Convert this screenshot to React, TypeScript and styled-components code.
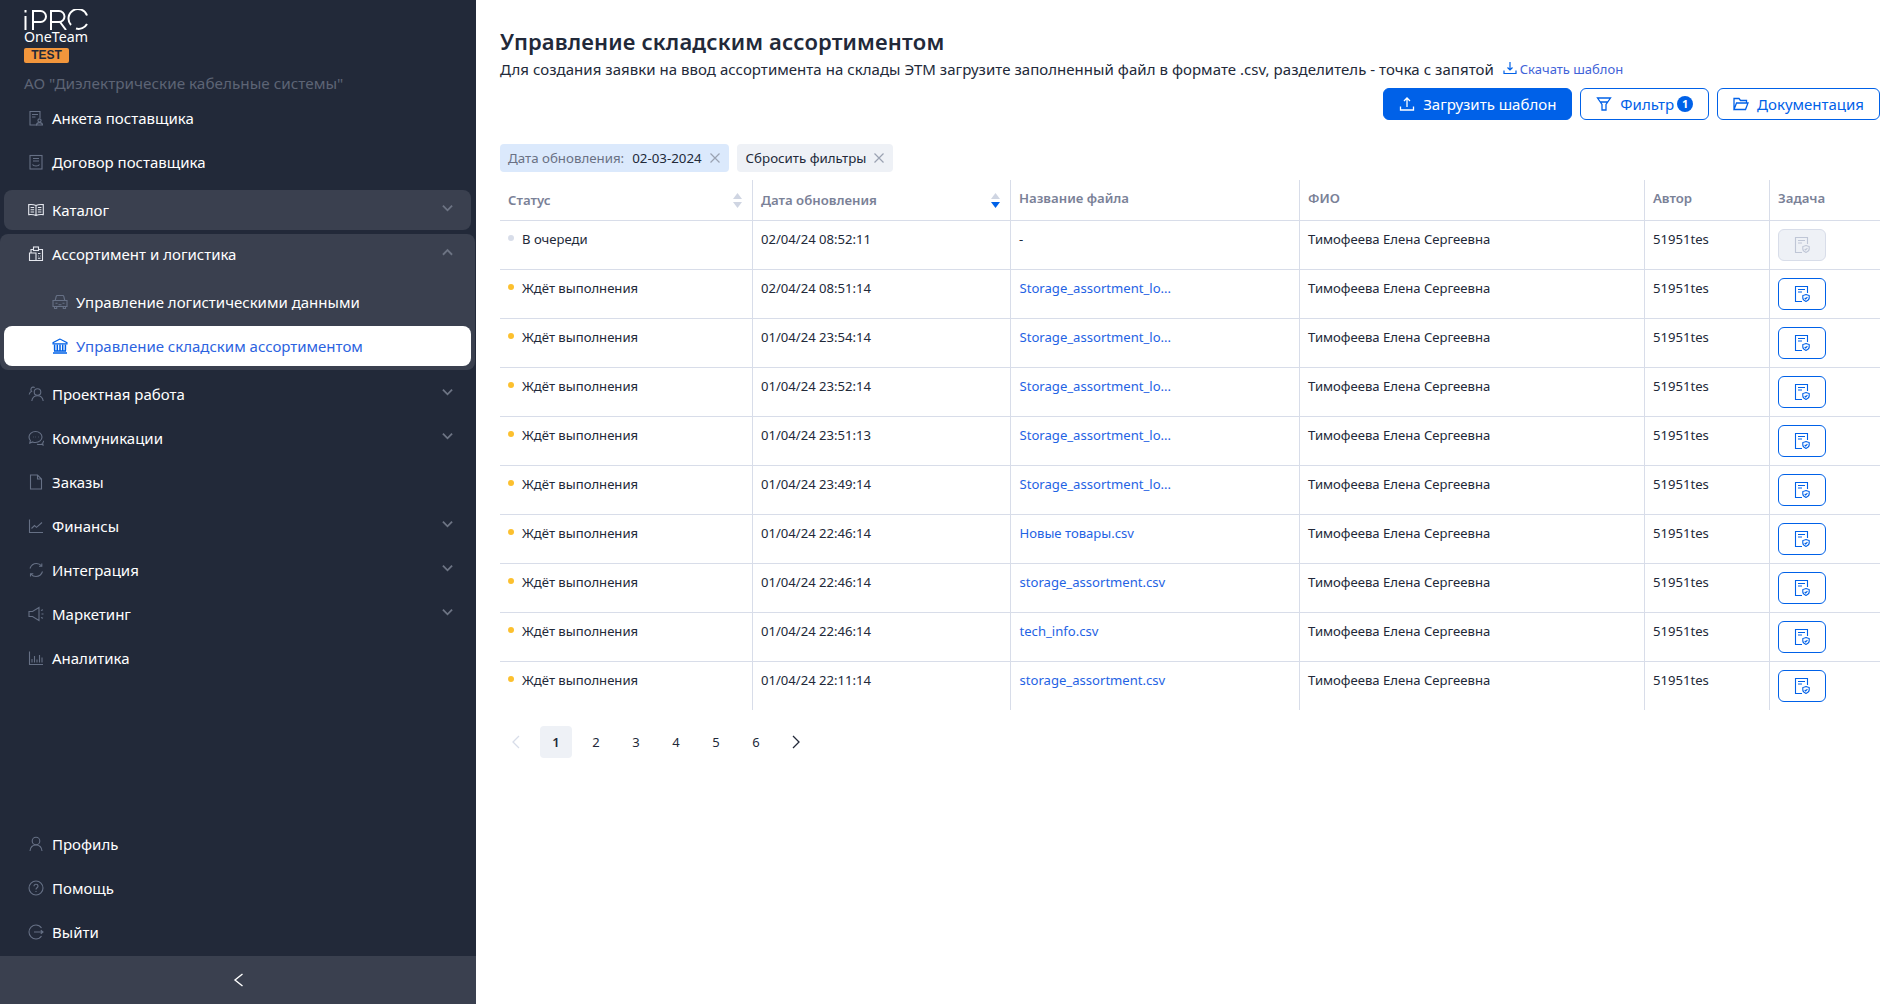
import * as React from "react";
import styled, { createGlobalStyle } from "styled-components";

const GlobalStyle = createGlobalStyle`
  html, body {
    margin: 0;
    padding: 0;
    height: 100%;
    background: #ffffff;
    font-family: "Noto Sans", "Liberation Sans", sans-serif;
    color: #222939;
  }
  #root { height: 100%; }
  * { box-sizing: border-box; }
`;

const Page = styled.div`
  display: flex;
  width: 100%;
  height: 1004px;
  overflow: hidden;
`;

/* ---------- sidebar ---------- */
const Sidebar = styled.aside`
  width: 476px;
  flex-shrink: 0;
  height: 100%;
  display: flex;
  flex-direction: column;
  background: #222939;
  color: #ffffff;
`;

const LogoBlock = styled.div`
  padding: 9px 0 0 24px;
  height: 98px;
`;

const LogoMark = styled.svg`
  display: block;
  width: 65px;
  height: 21px;
`;

const LogoName = styled.div`
  font-size: 14.2px;
  line-height: 15px;
  margin-top: -1px;
  font-weight: 400;
  width: 66px;
`;

const TestBadge = styled.div`
  width: 45px;
  height: 15px;
  margin-top: 4px;
  border-radius: 2px;
  background: #f2963c;
  color: #222939;
  font-size: 12px;
  line-height: 15px;
  font-weight: 600;
  text-align: center;
  font-family: "Liberation Sans", sans-serif;
`;

const Company = styled.div`
  margin-top: 10px;
  font-size: 15.3px;
  line-height: 20px;
  color: #5d6475;
  white-space: nowrap;
`;

const Nav = styled.nav`
  display: flex;
  flex-direction: column;
  gap: 4px;
`;

const Item = styled.div<{ $lit?: boolean; $hover?: boolean; $active?: boolean; $sub?: boolean }>`
  display: flex;
  align-items: center;
  height: 40px;
  margin: 0 5px 0 4px;
  padding-left: ${(p) => (p.$sub ? "48px" : "24px")};
  padding-right: 18px;
  gap: 8px;
  border-radius: 8px;
  font-size: 15px;
  line-height: 20px;
  white-space: nowrap;
  background: ${(p) => (p.$active ? "#ffffff" : p.$hover ? "#3a404f" : "transparent")};
  color: ${(p) => (p.$active ? "#2c63e0" : "#ffffff")};
  svg.nav-icon {
    color: ${(p) => (p.$active ? "#0061e8" : p.$lit ? "#e4e7ee" : "#667085")};
    flex-shrink: 0;
  }
`;

const ItemLabel = styled.span`
  flex: 1;
  padding-bottom: 1px;
`;

const Group = styled.div`
  display: flex;
  flex-direction: column;
  gap: 4px;
  margin-right: 1px;
  padding: 0 0 4px;
  border-radius: 8px;
  background: #3a404f;
  ${Item} {
    margin-right: 4px;
  }
`;

const CatalogSlot = styled.div`
  margin-top: 4px;
`;

const FirstSub = styled.div`
  margin-top: 4px;
`;

const Chevron = styled.svg`
  width: 11px;
  height: 8px;
  margin: -5px 0 0 0;
  color: #6d7484;
  flex-shrink: 0;
`;

const SideBottom = styled(Nav)`
  margin-top: auto;
  padding-bottom: 4px;
`;

const Collapse = styled.div`
  height: 48px;
  flex-shrink: 0;
  background: #3a404f;
  display: flex;
  align-items: center;
  justify-content: center;
  svg {
    width: 11px;
    height: 14px;
  }
`;

/* ---------- main ---------- */
const Main = styled.main`
  flex: 1;
  min-width: 0;
  padding: 27px 24px 0;
`;

const Title = styled.h1`
  margin: 0;
  font-size: 22px;
  line-height: 28px;
  font-weight: 600;
  letter-spacing: 0.15px;
  color: #222939;
`;

const Description = styled.div`
  display: flex;
  align-items: center;
  gap: 9px;
  height: 20px;
  margin-top: 4px;
  font-size: 15px;
  line-height: 20px;
  letter-spacing: 0.04px;
  white-space: nowrap;
`;

const DownloadLink = styled.a`
  display: inline-flex;
  align-items: center;
  gap: 3px;
  font-size: 13px;
  letter-spacing: 0;
  color: #3f63d8;
  svg {
    width: 14px;
    height: 14px;
    color: #0061e8;
    margin-bottom: 3px;
  }
`;

const Actions = styled.div`
  display: flex;
  justify-content: flex-end;
  gap: 8px;
  margin-top: 9px;
`;

const Button = styled.button<{ $primary?: boolean }>`
  display: inline-flex;
  align-items: center;
  justify-content: center;
  gap: 8px;
  height: 32px;
  padding: 0 15px;
  border-radius: 6px;
  border: 1px solid #0061e8;
  background: ${(p) => (p.$primary ? "#0061e8" : "#ffffff")};
  color: ${(p) => (p.$primary ? "#ffffff" : "#0061e8")};
  font-family: inherit;
  font-size: 15px;
  white-space: nowrap;
  svg {
    width: 16px;
    height: 16px;
    flex-shrink: 0;
  }
`;

const Counter = styled.span`
  width: 16px;
  height: 16px;
  margin-left: -5px;
  border-radius: 50%;
  background: #0061e8;
  color: #ffffff;
  font-size: 11px;
  line-height: 16px;
  font-weight: 700;
  text-align: center;
`;

const Chips = styled.div`
  display: flex;
  gap: 8px;
  margin-top: 24px;
`;

const Chip = styled.div<{ $blue?: boolean }>`
  display: inline-flex;
  align-items: center;
  height: 28px;
  padding: 0 8px 0 ${(p) => (p.$blue ? "8px" : "9px")};
  gap: 7px;
  border-radius: 4px;
  background: ${(p) => (p.$blue ? "#dbe9fc" : "#eef1f6")};
  font-size: 13.3px;
  white-space: nowrap;
  color: #222939;
  svg {
    width: 12px;
    height: 12px;
    color: #9aa2b2;
  }
`;

const ChipMuted = styled.span`
  color: #6a7184;
  margin-right: 8px;
`;

const Table = styled.table`
  width: 1380px;
  margin-top: 8px;
  border-collapse: separate;
  border-spacing: 0;
  table-layout: fixed;
  font-size: 13.1px;
  line-height: 20px;
`;

const Th = styled.th<{ $last?: boolean; $sortable?: boolean }>`
  position: relative;
  height: 41px;
  padding: ${(p) => (p.$sortable ? "10px 8px 0" : "8px 8px 0")};
  vertical-align: top;
  text-align: left;
  font-weight: 600;
  font-size: 13.2px;
  color: #7a8197;
  border-bottom: 1px solid #d8dde9;
  border-right: ${(p) => (p.$last ? "none" : "1px solid #d8dde9")};
`;

const Td = styled.td<{ $last?: boolean }>`
  height: 49px;
  padding: 8px;
  vertical-align: top;
  white-space: nowrap;
  overflow: hidden;
  color: #222939;
  border-right: ${(p) => (p.$last ? "none" : "1px solid #d8dde9")};
  tr:not(:last-child) > & {
    border-bottom: 1px solid #d8dde9;
  }
  tr:last-child > & {
    height: 48px;
  }
`;

const SortIcon = styled.svg`
  position: absolute;
  right: 9px;
  top: 12px;
  width: 11px;
  height: 17px;
`;

const StatusCell = styled.div`
  display: flex;
  align-items: center;
  gap: 8px;
`;

const Dot = styled.span<{ $tone: "wait" | "queue" }>`
  width: 6px;
  height: 6px;
  margin-top: -2px;
  border-radius: 50%;
  background: ${(p) => (p.$tone === "wait" ? "#fcc02e" : "#d8dde9")};
  flex-shrink: 0;
`;

const FileLink = styled.a`
  margin-left: 0.5px;
  color: #1f63e4;
`;

const TaskButton = styled.button<{ $disabled?: boolean }>`
  display: flex;
  align-items: center;
  justify-content: center;
  width: 48px;
  height: 32px;
  padding: 0;
  border-radius: 6px;
  border: 1px solid ${(p) => (p.$disabled ? "#d8dde9" : "#0061e8")};
  background: ${(p) => (p.$disabled ? "#eef1f6" : "#ffffff")};
  color: ${(p) => (p.$disabled ? "#bfc6d6" : "#0061e8")};
  svg {
    width: 16px;
    height: 16px;
  }
`;

const Pager = styled.div`
  display: flex;
  align-items: center;
  margin-top: 16px;
`;

const PageCell = styled.div<{ $current?: boolean; $muted?: boolean }>`
  width: 32px;
  height: 32px;
  margin-right: 8px;
  display: flex;
  align-items: center;
  justify-content: center;
  border-radius: 4px;
  font-size: 13px;
  color: ${(p) => (p.$muted ? "#d8dde9" : "#222939")};
  background: ${(p) => (p.$current ? "#eef1f6" : "transparent")};
  font-weight: ${(p) => (p.$current ? 600 : 400)};
  svg {
    width: 9px;
    height: 14px;
    margin-left: ${(p) => (p.$muted ? "-2px" : "0")};
  }
`;

/* ---------- icons ---------- */
type IconName =
  | "form" | "contract" | "book" | "clipboard" | "car" | "bank" | "people" | "chat"
  | "doc" | "chart" | "sync" | "horn" | "bars" | "user" | "help" | "exit";

const iconPaths: Record<IconName, React.ReactNode> = {
  form: (
    <>
      <path d="M9 15H2V1.500h10V8" />
      <path d="M4 4.500h6M4 7h3.500" />
      <circle cx="11.500" cy="10.500" r="1.600" />
      <path d="M8.500 15c0-1.600 1.200-2.400 3-2.400s3 .8 3 2.400z" />
    </>
  ),
  contract: (
    <>
      <rect x="2" y="1.500" width="12" height="13.500" />
      <path d="M5 4.500h6M5 7h6M4.500 10.500c1 2 6 2 7 0" />
    </>
  ),
  book: (
    <>
      <path d="M8 3.500C6 2.500 3 2.300.7 2.600v10C3 12.300 6 12.500 8 13.600c2-1.100 5-1.300 7.300-1V2.600C13 2.300 10 2.500 8 3.500zM8 3.500v10" />
      <path d="M2.600 5.500h3.500M2.600 7.800h3.500M2.600 10h3.500M9.900 5.500h3.500M9.900 7.800h3.500M9.900 10h3.500" />
    </>
  ),
  clipboard: (
    <>
      <path d="M5.500 3.500H3V7M10.500 3.500H14.500V14.500H1.500V7H8V14.500" />
      <rect x="5.500" y="1" width="5" height="3.500" />
      <path d="M10 7.500h2.500M10 10h.6M12 10h.6M10 12.300h2.500" />
    </>
  ),
  car: (
    <>
      <path d="M3.200 6.500l1-4.200c.1-.5.5-.8 1-.8h5.600c.5 0 .9.3 1 .8l1 4.200" />
      <path d="M1 6.500h14v6H1zM2.500 12.500v2h2.200v-2M11.300 12.500v2h2.200v-2" />
      <path d="M3.500 9.300h2M10.500 9.300h2M6.500 10.800h3" />
    </>
  ),
  bank: (
    <>
      <path d="M8 1L1 4.700v1.200h14V4.700z" />
      <path d="M2.600 6.500v6M5.300 6.500v6M8 6.500v6M10.700 6.500v6M13.400 6.500v6M2 13h12M1 15h14" strokeWidth="1.500" />
    </>
  ),
  people: (
    <>
      <circle cx="9.500" cy="6" r="3.300" />
      <path d="M3.800 15c.4-3 2.700-5.200 5.700-5.200s5.300 2.200 5.700 5.200" />
      <path d="M6.700 1.500c-.9-.6-2.800-.6-3.600.9-.5 1-.3 2 .5 2.900-1.300.6-2.100 1.700-2.400 3.200" />
    </>
  ),
  chat: (
    <>
      <path d="M7.500 1.500c-3.500 0-6.500 2.400-6.500 5.500 0 1.300.5 2.500 1.400 3.500L1.800 13l2.900-1.100c.9.4 1.800.6 2.800.6 3.500 0 6.500-2.400 6.500-5.500S11 1.500 7.500 1.500z" />
      <path d="M5 7h.5M7.500 7H8M10 7h.5M9 14.200c2 .6 3.500.3 4.500 0l1.500.8-.3-2c.5-.7.9-1.400 1-2.200" />
    </>
  ),
  doc: <path d="M2.500 1h7l4 4v10h-11zM9.500 1v4h4" />,
  chart: (
    <>
      <path d="M1.500 1.500V14.500H15" />
      <path d="M3.500 10.500l3-3 2 1.800L14 4.500" />
    </>
  ),
  sync: (
    <>
      <path d="M2 6.500C3 3.500 5.500 1.500 8.500 1.500c2 0 3.800.9 5 2.400" />
      <path d="M14.500 9.500c-1 3-3.500 5-6.500 5-2 0-3.800-.9-5-2.400" />
      <path d="M13.800 1.500v2.800H11M2.500 14.500v-2.800h2.800" />
    </>
  ),
  horn: (
    <>
      <path d="M1 5.500h3.500L11 1.500v13l-6.500-4H1z" />
      <path d="M13 4.500l2-.8M13.500 8H15.500M13 11.500l2 .8" />
    </>
  ),
  bars: <path d="M1.500 1.500V14.500H15M4 12.500V9M6.500 12.500V6M9 12.500V9.500M11.500 12.500V5M14 12.500V7.500" />,
  user: (
    <>
      <circle cx="8" cy="5" r="3.800" />
      <path d="M2 15c.4-3.600 2.800-6 6-6s5.600 2.400 6 6" />
    </>
  ),
  help: (
    <>
      <circle cx="8" cy="8" r="7" />
      <path d="M6 6.300c0-1.200.9-2 2-2s2 .8 2 1.900c0 1.500-2 1.600-2 3.200M8 11v.9" />
    </>
  ),
  exit: <path d="M13.500 4c-1.300-1.900-3.300-3-5.500-3a7 7 0 000 14c2.200 0 4.200-1.100 5.500-3M6 8h9M12.800 6.200L15 8l-2.200 1.800" />,
};

function NavIcon({ name }: { name: IconName }) {
  return (
    <svg className="nav-icon" width="16" height="16" viewBox="0 0 16 16" fill="none" stroke="currentColor" strokeWidth="1.100">
      {iconPaths[name]}
    </svg>
  );
}

function ChevronIcon({ up }: { up?: boolean }) {
  return (
    <Chevron viewBox="0 0 12 8" fill="none" stroke="currentColor" strokeWidth="2">
      <path d={up ? "M1 7l5-5 5 5" : "M1 1.500l5 5 5-5"} />
    </Chevron>
  );
}

function CrossIcon() {
  return (
    <svg viewBox="0 0 12 12" fill="none" stroke="currentColor" strokeWidth="1.200">
      <path d="M1.500 1.500l9 9M10.500 1.500l-9 9" />
    </svg>
  );
}

function TaskIcon() {
  return (
    <svg viewBox="0 0 16 16" fill="none" stroke="currentColor" strokeWidth="1.100">
      <path d="M8 15.500H1.500V.5h12v6.500" />
      <path d="M4 3.500h7M4 6h4" />
      <path d="M12 8.500l3.200 1.100v2.500c0 1.500-1.300 2.600-3.200 3.400-1.900-.8-3.200-1.900-3.200-3.400V9.600z" />
      <path d="M10.700 12l1 1 1.700-1.800" />
    </svg>
  );
}

const rows: { date: string; file: string }[] = [
  { date: "02/04/24 08:51:14", file: "Storage_assortment_lo..." },
  { date: "01/04/24 23:54:14", file: "Storage_assortment_lo..." },
  { date: "01/04/24 23:52:14", file: "Storage_assortment_lo..." },
  { date: "01/04/24 23:51:13", file: "Storage_assortment_lo..." },
  { date: "01/04/24 23:49:14", file: "Storage_assortment_lo..." },
  { date: "01/04/24 22:46:14", file: "Новые товары.csv" },
  { date: "01/04/24 22:46:14", file: "storage_assortment.csv" },
  { date: "01/04/24 22:46:14", file: "tech_info.csv" },
  { date: "01/04/24 22:11:14", file: "storage_assortment.csv" },
];

const NAME = "Тимофеева Елена Сергеевна";
const AUTHOR = "51951tes";

export default function App() {
  return (
    <Page>
      <GlobalStyle />
      <Sidebar>
        <LogoBlock>
          <LogoMark viewBox="0 0 65 21" fill="none" stroke="#ffffff" strokeWidth="2">
            <path d="M1.500 7v14M1.500 1v2.500" />
            <path d="M9 21V2h7.500a5.500 5.500 0 010 11H9" />
            <path d="M27 21V2h8a5.500 5.500 0 010 11h-8M36 13l6 8" />
            <path d="M63 6.500A9.500 9.500 0 1047 16M63 15a9.500 9.500 0 01-11 4.500" />
          </LogoMark>
          <LogoName>OneTeam</LogoName>
          <TestBadge>TEST</TestBadge>
          <Company>АО "Диэлектрические кабельные системы"</Company>
        </LogoBlock>
        <Nav>
          <Item>
            <NavIcon name="form" />
            <ItemLabel>Анкета поставщика</ItemLabel>
          </Item>
          <Item>
            <NavIcon name="contract" />
            <ItemLabel>Договор поставщика</ItemLabel>
          </Item>
          <CatalogSlot>
            <Item $hover $lit>
              <NavIcon name="book" />
              <ItemLabel>Каталог</ItemLabel>
              <ChevronIcon />
            </Item>
          </CatalogSlot>
          <Group>
            <Item $lit>
              <NavIcon name="clipboard" />
              <ItemLabel>Ассортимент и логистика</ItemLabel>
              <ChevronIcon up />
            </Item>
            <FirstSub>
              <Item $sub>
                <NavIcon name="car" />
                <ItemLabel>Управление логистическими данными</ItemLabel>
              </Item>
            </FirstSub>
            <Item $sub $active>
              <NavIcon name="bank" />
              <ItemLabel>Управление складским ассортиментом</ItemLabel>
            </Item>
          </Group>
          <Item>
            <NavIcon name="people" />
            <ItemLabel>Проектная работа</ItemLabel>
            <ChevronIcon />
          </Item>
          <Item>
            <NavIcon name="chat" />
            <ItemLabel>Коммуникации</ItemLabel>
            <ChevronIcon />
          </Item>
          <Item>
            <NavIcon name="doc" />
            <ItemLabel>Заказы</ItemLabel>
          </Item>
          <Item>
            <NavIcon name="chart" />
            <ItemLabel>Финансы</ItemLabel>
            <ChevronIcon />
          </Item>
          <Item>
            <NavIcon name="sync" />
            <ItemLabel>Интеграция</ItemLabel>
            <ChevronIcon />
          </Item>
          <Item>
            <NavIcon name="horn" />
            <ItemLabel>Маркетинг</ItemLabel>
            <ChevronIcon />
          </Item>
          <Item>
            <NavIcon name="bars" />
            <ItemLabel>Аналитика</ItemLabel>
          </Item>
        </Nav>
        <SideBottom>
          <Item>
            <NavIcon name="user" />
            <ItemLabel>Профиль</ItemLabel>
          </Item>
          <Item>
            <NavIcon name="help" />
            <ItemLabel>Помощь</ItemLabel>
          </Item>
          <Item>
            <NavIcon name="exit" />
            <ItemLabel>Выйти</ItemLabel>
          </Item>
        </SideBottom>
        <Collapse>
          <svg viewBox="0 0 11 14" fill="none" stroke="#ffffff" strokeWidth="1.400">
            <path d="M9.500 1L2 7l7.500 6" />
          </svg>
        </Collapse>
      </Sidebar>

      <Main>
        <Title>Управление складским ассортиментом</Title>
        <Description>
          Для создания заявки на ввод ассортимента на склады ЭТМ загрузите заполненный файл в формате .csv, разделитель - точка с запятой
          <DownloadLink>
            <svg viewBox="0 0 14 14" fill="none" stroke="currentColor" strokeWidth="1.200">
              <path d="M7 1v8M4.500 6.500L7 9l2.500-2.500M1 9.500V12.500H13V9.500" />
            </svg>
            Скачать шаблон
          </DownloadLink>
        </Description>
        <Actions>
          <Button $primary>
            <svg viewBox="0 0 16 16" fill="none" stroke="currentColor" strokeWidth="1.300">
              <path d="M8 11V2M5 5l3-3 3 3M1.500 10.500V14h13v-3.500" />
            </svg>
            Загрузить шаблон
          </Button>
          <Button>
            <svg viewBox="0 0 16 16" fill="none" stroke="currentColor" strokeWidth="1.300">
              <path d="M1.500 2h13l-4.500 6.500V14H6V8.500zM4 6h8" />
            </svg>
            Фильтр
            <Counter>1</Counter>
          </Button>
          <Button>
            <svg viewBox="0 0 16 16" fill="none" stroke="currentColor" strokeWidth="1.300">
              <path d="M1 13.500V2.500h5l1.500 2h6v2.500M1 13.500h11.500L15 7H3.500z" />
            </svg>
            Документация
          </Button>
        </Actions>
        <Chips>
          <Chip $blue>
            <span>
              <ChipMuted>Дата обновления:</ChipMuted>02-03-2024
            </span>
            <CrossIcon />
          </Chip>
          <Chip>
            <span>Сбросить фильтры</span>
            <CrossIcon />
          </Chip>
        </Chips>
        <Table>
          <colgroup>
            <col style={{ width: 253 }} />
            <col style={{ width: 258 }} />
            <col style={{ width: 289 }} />
            <col style={{ width: 345 }} />
            <col style={{ width: 125 }} />
            <col style={{ width: 110 }} />
          </colgroup>
          <thead>
            <tr>
              <Th $sortable>
                Статус
                <SortIcon viewBox="0 0 11 17">
                  <path d="M5.500 1L10 7H1z" fill="#cfd5e2" />
                  <path d="M5.500 16L10 10H1z" fill="#cfd5e2" />
                </SortIcon>
              </Th>
              <Th $sortable>
                Дата обновления
                <SortIcon viewBox="0 0 11 17">
                  <path d="M5.500 1L10 7H1z" fill="#cfd5e2" />
                  <path d="M5.500 16L10 10H1z" fill="#0061e8" />
                </SortIcon>
              </Th>
              <Th>Название файла</Th>
              <Th>ФИО</Th>
              <Th>Автор</Th>
              <Th $last>Задача</Th>
            </tr>
          </thead>
          <tbody>
            <tr>
              <Td>
                <StatusCell>
                  <Dot $tone="queue" />В очереди
                </StatusCell>
              </Td>
              <Td>02/04/24 08:52:11</Td>
              <Td>-</Td>
              <Td>{NAME}</Td>
              <Td>{AUTHOR}</Td>
              <Td $last>
                <TaskButton $disabled>
                  <TaskIcon />
                </TaskButton>
              </Td>
            </tr>
            {rows.map((row, i) => (
              <tr key={i}>
                <Td>
                  <StatusCell>
                    <Dot $tone="wait" />
                    Ждёт выполнения
                  </StatusCell>
                </Td>
                <Td>{row.date}</Td>
                <Td>
                  <FileLink>{row.file}</FileLink>
                </Td>
                <Td>{NAME}</Td>
                <Td>{AUTHOR}</Td>
                <Td $last>
                  <TaskButton>
                    <TaskIcon />
                  </TaskButton>
                </Td>
              </tr>
            ))}
          </tbody>
        </Table>
        <Pager>
          <PageCell $muted>
            <svg viewBox="0 0 9 14" fill="none" stroke="currentColor" strokeWidth="1.300">
              <path d="M8 1L2 7l6 6" />
            </svg>
          </PageCell>
          <PageCell $current>1</PageCell>
          <PageCell>2</PageCell>
          <PageCell>3</PageCell>
          <PageCell>4</PageCell>
          <PageCell>5</PageCell>
          <PageCell>6</PageCell>
          <PageCell>
            <svg viewBox="0 0 9 14" fill="none" stroke="currentColor" strokeWidth="1.300">
              <path d="M1 1l6 6-6 6" />
            </svg>
          </PageCell>
        </Pager>
      </Main>
    </Page>
  );
}
